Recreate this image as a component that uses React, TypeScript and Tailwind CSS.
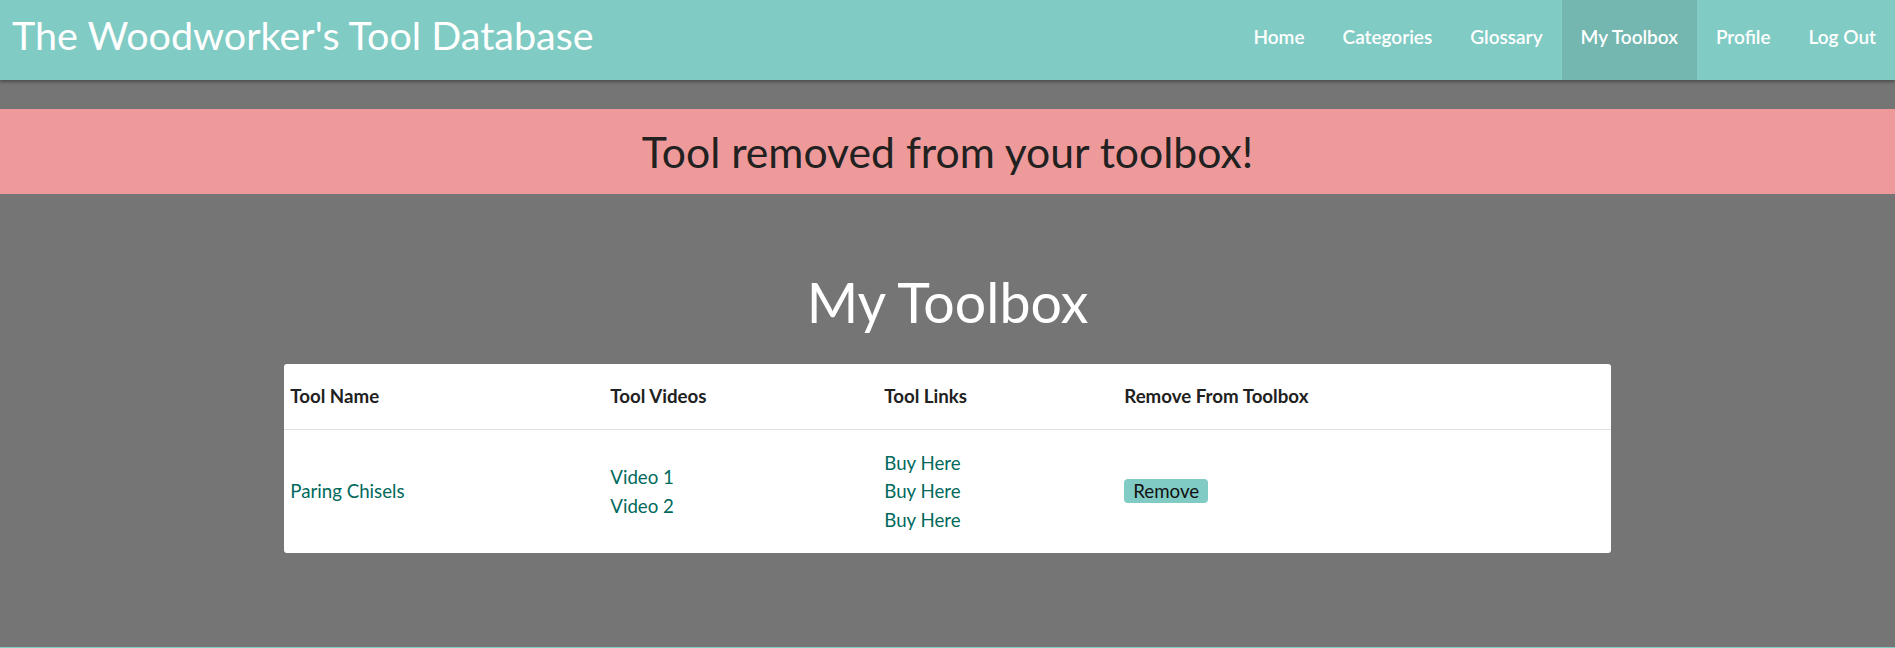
import React from "react";

const navItems = ["Home", "Categories", "Glossary", "My Toolbox", "Profile", "Log Out"];

export default function App() {
  return (
    <div className="w-full bg-[#757575] font-['Lato','Liberation_Sans',sans-serif]">
      <header className="relative z-10 flex h-[80px] items-stretch justify-between bg-[#80cbc4] shadow-[0_2px_3px_rgba(0,0,0,0.35)]">
        <div className="flex items-center pl-[12px]">
          <h1 className="mb-[11px] text-[39.5px] font-normal leading-[48px] text-white">
            The Woodworker's Tool Database
          </h1>
        </div>
        <ul className="flex items-stretch">
          {navItems.map((item) => (
            <li key={item} className={item === "My Toolbox" ? "flex bg-[#73b7b0]" : "flex"}>
              <a className="flex items-center px-[19px] pb-[6px] text-[19px] font-semibold text-white">
                {item}
              </a>
            </li>
          ))}
        </ul>
      </header>
      <main className="h-[567px] pt-[29px]">
        <div className="flex h-[85px] items-center justify-center bg-[#ef9a9a]">
          <h3 className="text-[42.7px] font-normal leading-[52px] text-[#212121]">Tool removed from your toolbox!</h3>
        </div>
        <h2 className="mt-[74px] mb-[29px] text-center text-[55.5px] font-normal leading-[67px] text-white">My Toolbox</h2>
        <div className="mx-auto w-[70%] rounded-[3px] bg-white text-[18.7px] leading-[28.5px]">
          <div className="grid h-[66px] grid-cols-[320px_274px_240px_1fr] items-center border-b border-[#e0e0e0] font-bold text-[#212121]">
            <div className="pl-[6px]">Tool Name</div>
            <div className="pl-[6px]">Tool Videos</div>
            <div className="pl-[6px]">Tool Links</div>
            <div className="pl-[6px]">Remove From Toolbox</div>
          </div>
          <div className="grid h-[123px] grid-cols-[320px_274px_240px_1fr] items-center text-[#00695c]">
            <div className="pl-[6px]">Paring Chisels</div>
            <div className="flex flex-col pl-[6px]">
              <a>Video 1</a>
              <a>Video 2</a>
            </div>
            <div className="flex flex-col pl-[6px]">
              <a>Buy Here</a>
              <a>Buy Here</a>
              <a>Buy Here</a>
            </div>
            <div className="pl-[6px]">
              <button className="h-[24px] rounded-[4px] bg-[#80cbc4] px-[9px] text-[18.7px] leading-[24px] text-[#111]">
                Remove
              </button>
            </div>
          </div>
        </div>
      </main>
      <footer className="h-[120px] bg-[#80cbc4]"></footer>
    </div>
  );
}
